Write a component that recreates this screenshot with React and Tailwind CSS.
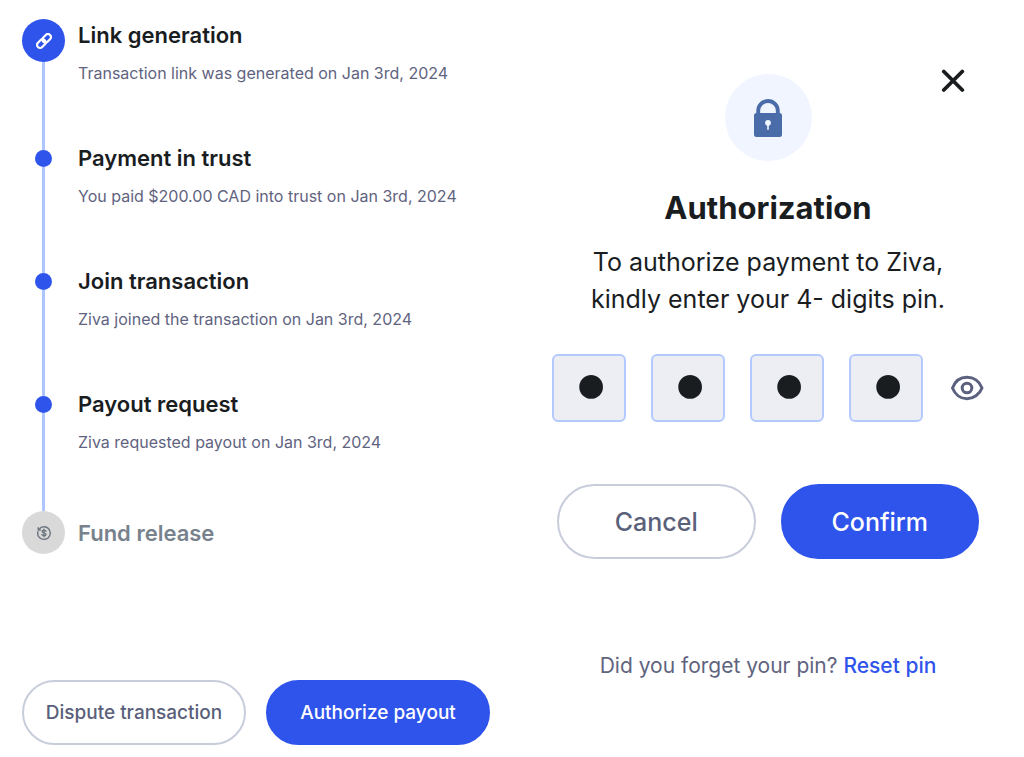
import React, { useState } from 'react';

const steps = [
    { id: 1, title: 'Link generation', detail: 'Transaction link was generated on Jan 3rd, 2024', type: 'start' },
    { id: 2, title: 'Payment in trust', detail: 'You paid $200.00 CAD into trust on Jan 3rd, 2024', type: 'done' },
    { id: 3, title: 'Join transaction', detail: 'Ziva joined the transaction on Jan 3rd, 2024', type: 'done' },
    { id: 4, title: 'Payout request', detail: 'Ziva requested payout on Jan 3rd, 2024', type: 'done' },
];

const LinkIcon = () => (
    <svg viewBox="0 0 16 16" className="w-4 h-4" fill="none" stroke="currentColor" strokeWidth="2.2">
        <g transform="rotate(-45 8 8)">
            <rect x="-0.500" y="5" width="9.500" height="6" rx="3" />
            <rect x="7" y="5" width="9.500" height="6" rx="3" />
        </g>
    </svg>
);

const RefundIcon = () => (
    <svg viewBox="0 0 16 16" className="w-4 h-4" fill="none" stroke="currentColor" strokeWidth="1.4" strokeLinecap="round" strokeLinejoin="round">
        <path d="M3 4.200a6.300 6.300 0 1 1-1.200 2.600" />
        <path d="M2.200 2.800v2.200h2.200" />
        <path d="M10 6.300C9.700 5.500 9 5.200 8 5.200c-1.100 0-1.900.5-1.900 1.300C6.100 8.400 10 7.600 10 9.500c0 .8-.9 1.300-2 1.300s-1.800-.4-2.100-1.200M8 4.300v7.400" />
    </svg>
);

const LockIcon = () => (
    <svg viewBox="0 0 28 38" className="w-7 h-[38px]">
        <path d="M4.200 16V11.800a9.800 9.800 0 0 1 19.600 0V16" fill="none" stroke="#4a6da9" strokeWidth="3.900" />
        <rect y="14" width="28" height="24" rx="2.500" fill="#4a6da9" />
        <circle cx="14" cy="23.800" r="2.900" fill="#f0f5ff" />
        <path d="M14 25v5.300" stroke="#f0f5ff" strokeWidth="1.600" strokeLinecap="round" />
    </svg>
);

const CloseIcon = () => (
    <svg viewBox="0 0 24 24" className="w-6 h-6" fill="none" stroke="currentColor" strokeWidth="3.800" strokeLinecap="round">
        <path d="M2.800 2.500l18.500 18.500M21.300 2.500l-18.500 18.500" />
    </svg>
);

const EyeIcon = () => (
    <svg viewBox="0 0 36 36" className="w-9 h-9" fill="none" stroke="currentColor" strokeWidth="3" strokeLinejoin="round">
        <path d="M4.500 18C7 11.200 12.500 7.300 19 7.300S31.500 11.200 34 18C31.500 24.500 25.500 28.700 19 28.700S7 24.500 4.500 18Z" />
        <circle cx="19" cy="18" r="4.800" />
    </svg>
);

const Timeline = () => (
    <ol>
        {steps.map((step) => (
            <li key={step.id} className="flex gap-[13px] h-[123px]">
                <div className="w-[43px] flex flex-col items-center shrink-0">
                    {step.type === 'start' ? (
                        <span className="w-[43px] h-[43px] rounded-full bg-[#2f54eb] text-white flex items-center justify-center">
                            <LinkIcon />
                        </span>
                    ) : (
                        <>
                            <span className="w-[3px] h-2 bg-[#adc6ff]" />
                            <span className="w-[17px] h-[17px] rounded-full bg-[#2f54eb]" />
                        </>
                    )}
                    <span className="w-[3px] flex-1 bg-[#adc6ff]" />
                </div>
                <div>
                    <h2 className="text-[22px] leading-8 font-semibold text-[#1a1d1f]">{step.title}</h2>
                    <p className="mt-2 text-base leading-7 text-[#5f6380]">{step.detail}</p>
                </div>
            </li>
        ))}
        <li className="flex items-center gap-[13px]">
            <span className="w-[43px] h-[43px] rounded-full bg-[#d9d9d9] text-[#6f7882] flex items-center justify-center">
                <RefundIcon />
            </span>
            <h2 className="text-[22px] leading-8 font-semibold text-[#78828c]">Fund release</h2>
        </li>
    </ol>
);

const Authorization = () => {
    const [pin, setPin] = useState(['1', '2', '3', '4']);
    const [visible, setVisible] = useState(false);

    const handleChange = (index, value) => {
        setPin(prev => prev.map((digit, i) => (i === index ? value : digit)));
    };

    return (
        <section className="pt-[69px] text-center">
            <div className="grid grid-cols-[1fr_auto_1fr] px-[59px]">
                <span className="col-start-2 mt-[5px] w-[87px] h-[87px] rounded-full bg-[#f0f5ff] flex items-center justify-center">
                    <LockIcon />
                </span>
                <button type="button" aria-label="Close" className="self-start justify-self-end text-[#1a1d1f]">
                    <CloseIcon />
                </button>
            </div>

            <h1 className="mt-[27px] text-[31px] leading-10 font-bold text-[#1a1d1f]">Authorization</h1>
            <p className="mt-4 text-[25px] leading-[37px] text-[#1a1d1f]">
                To authorize payment to Ziva,<br />
                kindly enter your 4- digits pin.
            </p>

            <form onSubmit={(e) => e.preventDefault()}>
                <div className="mt-9 px-10 flex items-center gap-[25px]">
                    {pin.map((digit, index) => (
                        <input
                            key={index}
                            type={visible ? 'text' : 'password'}
                            aria-label={`Pin digit ${index + 1}`}
                            maxLength={1}
                            value={digit}
                            onChange={(e) => handleChange(index, e.target.value)}
                            className="flex-1 min-w-0 h-[68px] pl-1 pb-3.5 rounded-md border-2 border-[#b4caff] bg-[#edeef3] text-center text-[76px] leading-none text-[#1a1d1f]"
                        />
                    ))}
                    <button type="button" aria-label="Show pin" onClick={() => setVisible(!visible)} className="text-[#5d6180]">
                        <EyeIcon />
                    </button>
                </div>

                <div className="mt-[62px] px-[45px] flex gap-[25px] text-[25px] font-medium">
                    <button type="button" className="flex-1 h-[75px] pt-0.5 rounded-full border-2 border-[#c8cddc] text-[#5a5f7a]">Cancel</button>
                    <button type="submit" className="flex-1 h-[75px] pt-0.5 rounded-full border-2 border-[#2f54eb] bg-[#2f54eb] text-white">Confirm</button>
                </div>
            </form>

            <p className="mt-[91px] text-[21px] leading-8 text-[#5f6380]">
                Did you forget your pin? <a href="#reset" className="font-medium text-[#2f54eb]">Reset pin</a>
            </p>
        </section>
    );
};

const App = () => {
    return (
        <main className="min-h-screen bg-white grid grid-cols-2 font-['Inter',sans-serif]">
            <section className="pt-[19px] px-[22px]">
                <Timeline />
                <div className="mt-[126px] pb-3 flex gap-5 text-[19px] font-medium">
                    <button type="button" className="flex-1 h-[65px] pt-0.5 rounded-full border-2 border-[#c8cddc] text-[#5a5f7a]">Dispute transaction</button>
                    <button type="button" className="flex-1 h-[65px] pt-0.5 rounded-full border-2 border-[#2f54eb] bg-[#2f54eb] text-white">Authorize payout</button>
                </div>
            </section>
            <Authorization />
        </main>
    );
};

export default App;
